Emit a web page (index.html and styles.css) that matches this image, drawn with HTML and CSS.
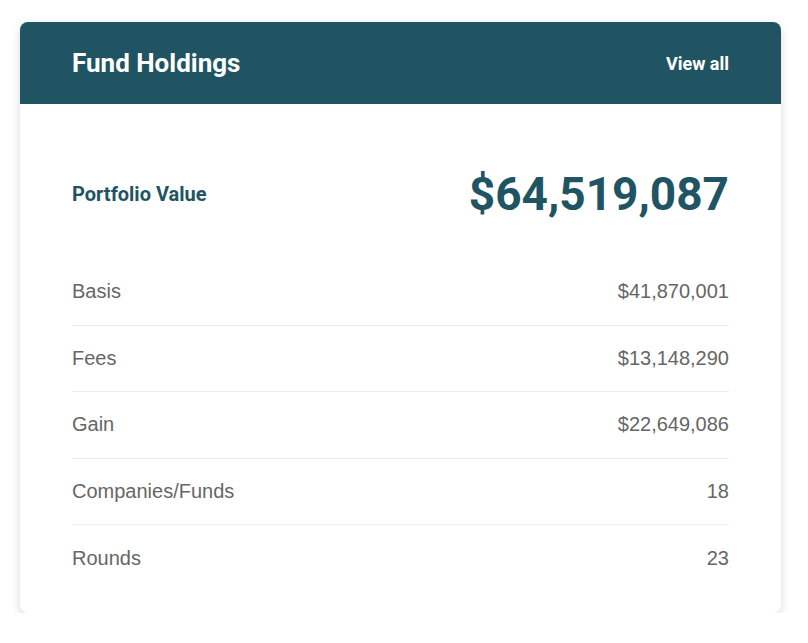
FILE: index.html
```html
<!DOCTYPE html>
<html>
<head>
<meta charset="utf-8">
<link rel="stylesheet" href="styles.css">
</head>
<body>
<div class="page">
  <section class="card">
    <header class="card-header">
      <h2 class="card-title">Fund Holdings</h2>
      <a class="view-all" href="#">View all</a>
    </header>
    <div class="card-body">
      <div class="summary">
        <span class="summary-label">Portfolio Value</span>
        <span class="summary-value">$64,519,087</span>
      </div>
      <ul class="stats">
        <li class="stat"><span>Basis</span><span>$41,870,001</span></li>
        <li class="stat"><span>Fees</span><span>$13,148,290</span></li>
        <li class="stat"><span>Gain</span><span>$22,649,086</span></li>
        <li class="stat"><span>Companies/Funds</span><span>18</span></li>
        <li class="stat"><span>Rounds</span><span>23</span></li>
      </ul>
    </div>
  </section>
</div>
</body>
</html>
```
FILE: styles.css
```css
* { box-sizing: border-box; }
html, body { margin: 0; padding: 0; background: #ffffff; }
.page {
  padding: 22px 27px 0 20px;
  width: 808px;
}
.card {
  width: 761px;
  background: #fff;
  border-radius: 8px;
  box-shadow: 0 3px 10px rgba(0,0,0,0.15);
  overflow: hidden;
}
.card-header {
  height: 82px;
  background: #215463;
  display: flex;
  align-items: center;
  justify-content: space-between;
  padding: 0 52px;
}
.card-title {
  margin: 0;
  font-family: Roboto, sans-serif;
  font-weight: 700;
  font-size: 26px;
  color: #fff;
}
.view-all {
  font-family: Roboto, sans-serif;
  font-weight: 700;
  font-size: 18px;
  color: #fff;
  text-decoration: none;
}
.card-body {
  padding: 25px 52px 21px;
}
.summary {
  height: 130px;
  display: flex;
  align-items: center;
  justify-content: space-between;
}
.summary-label {
  font-family: Roboto, sans-serif;
  font-weight: 700;
  font-size: 20px;
  color: #215463;
}
.summary-value {
  font-family: Roboto, sans-serif;
  font-weight: 700;
  font-size: 46px;
  color: #215463;
}
.stats {
  list-style: none;
  margin: 0;
  padding: 0;
}
.stat {
  height: 66.5px;
  display: flex;
  align-items: center;
  justify-content: space-between;
  border-bottom: 1px solid #ececec;
  font-family: "Liberation Sans", Arial, sans-serif;
  font-size: 20px;
  color: #666;
}
.stat:last-child { border-bottom: none; }
```
